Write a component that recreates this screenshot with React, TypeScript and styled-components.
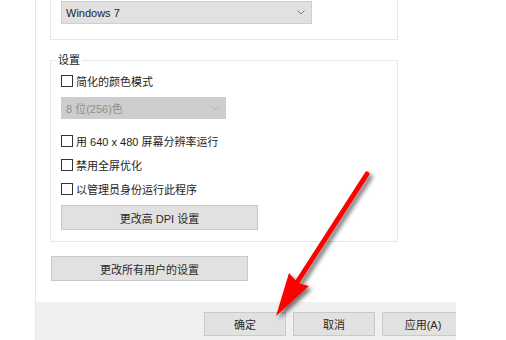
import styled, { createGlobalStyle } from 'styled-components';

const GlobalStyle = createGlobalStyle`
  body {
    margin: 0;
    background: #ffffff;
    font-family: 'Liberation Sans', 'Noto Sans CJK SC', sans-serif;
  }
`;

const Page = styled.div`
  position: relative;
  width: 506px;
  height: 340px;
  overflow: hidden;
  background: #ffffff;
`;

const Dialog = styled.div`
  display: flex;
  flex-direction: column;
  width: 420px;
  height: 340px;
  margin-left: 35px;
  border-left: 1px solid #e8e8e8;
  overflow: hidden;
`;

const Content = styled.div`
  display: flex;
  flex-direction: column;
  align-items: flex-start;
  height: 302px;
  padding-left: 14px;
  background: #ffffff;
`;

const TopGroup = styled.div`
  box-sizing: border-box;
  width: 348px;
  height: 40px;
  padding: 1px 0 0 10px;
  border: 1px solid #e6e6e6;
  border-top: none;
`;

const Group = styled.div`
  box-sizing: border-box;
  display: flex;
  flex-direction: column;
  align-items: flex-start;
  width: 348px;
  margin-top: 20px;
  padding: 0 0 11px 10px;
  border: 1px solid #e6e6e6;
`;

const Legend = styled.span`
  margin: -8px 0 0 -5px;
  padding: 0 2px;
  height: 14px;
  line-height: 14px;
  font-size: 11px;
  color: #222;
  background: #ffffff;
`;

const Select = styled.div<{ $disabled?: boolean; $width: number }>`
  box-sizing: border-box;
  display: flex;
  align-items: center;
  justify-content: space-between;
  width: ${(p) => p.$width}px;
  height: ${(p) => (p.$disabled ? 22 : 23)}px;
  margin-top: ${(p) => (p.$disabled ? 4 : 0)}px;
  padding: 0 6px 0 4px;
  font-size: 11px;
  color: ${(p) => (p.$disabled ? '#8e8e8e' : '#1e1e1e')};
  background: ${(p) => (p.$disabled ? '#cdcdcd' : '#e1e1e1')};
  border: 1px solid ${(p) => (p.$disabled ? '#cdcdcd' : '#cfcfcf')};
`;

const CheckRow = styled.label<{ $gap?: number }>`
  display: flex;
  align-items: center;
  height: 24px;
  margin-top: ${(p) => p.$gap ?? 0}px;
  font-size: 11px;
  color: #1e1e1e;
`;

const Box = styled.span`
  box-sizing: border-box;
  width: 12px;
  height: 12px;
  margin-right: 3px;
  border: 1px solid #333333;
  background: #ffffff;
`;

const Button = styled.button<{ $width: number; $height?: number }>`
  box-sizing: border-box;
  flex: none;
  width: ${(p) => p.$width}px;
  height: ${(p) => p.$height ?? 25}px;
  padding: 0;
  font-family: inherit;
  font-size: 11px;
  color: #2a2a2a;
  background: #e1e1e1;
  border: 1px solid #c9c9c9;
`;

const DpiButton = styled(Button)`
  margin-top: 4px;
`;

const AllUsersButton = styled(Button)`
  margin: 14px 0 0 1px;
`;

const Footer = styled.div`
  display: flex;
  gap: 7px;
  height: 38px;
  padding: 10px 0 0 168px;
  box-sizing: border-box;
  background: #f0f0f0;
`;

const Arrow = styled.svg`
  position: absolute;
  left: 0;
  top: 0;
  pointer-events: none;
`;

const Chevron = ({ color }: { color: string }) => (
  <svg width="8" height="5" viewBox="0 0 8 5">
    <polyline points="0.5,0.5 4,4 7.5,0.5" fill="none" stroke={color} strokeWidth="1" />
  </svg>
);

const App = () => {
  return (
    <Page>
      <GlobalStyle />
      <Dialog>
        <Content>
          <TopGroup>
            <Select $width={251}>
              Windows 7
              <Chevron color="#7a7a7a" />
            </Select>
          </TopGroup>
          <Group>
            <Legend>设置</Legend>
            <CheckRow $gap={2}>
              <Box />
              简化的颜色模式
            </CheckRow>
            <Select $disabled $width={165}>
              8 位(256)色
              <Chevron color="#b5b5b5" />
            </Select>
            <CheckRow $gap={10}>
              <Box />
              用 640 x 480 屏幕分辨率运行
            </CheckRow>
            <CheckRow>
              <Box />
              禁用全屏优化
            </CheckRow>
            <CheckRow>
              <Box />
              以管理员身份运行此程序
            </CheckRow>
            <DpiButton $width={197}>更改高 DPI 设置</DpiButton>
          </Group>
          <AllUsersButton $width={197}>更改所有用户的设置</AllUsersButton>
        </Content>
        <Footer>
          <Button $width={82} $height={24}>确定</Button>
          <Button $width={82} $height={24}>取消</Button>
          <Button $width={82} $height={24}>应用(A)</Button>
        </Footer>
      </Dialog>
      <Arrow width="506" height="340" viewBox="0 0 506 340">
        <defs>
          <filter id="shadow" x="-20%" y="-20%" width="150%" height="150%">
            <feDropShadow dx="3" dy="3" stdDeviation="2" floodColor="#000" floodOpacity="0.55" />
          </filter>
        </defs>
        <g filter="url(#shadow)">
          <line x1="367" y1="174" x2="296" y2="284" stroke="#ff0000" strokeWidth="5" strokeLinecap="round" />
          <polygon points="276,316 289,273 298,283 309,286" fill="#ff0000" />
        </g>
      </Arrow>
    </Page>
  );
};

export default App;
